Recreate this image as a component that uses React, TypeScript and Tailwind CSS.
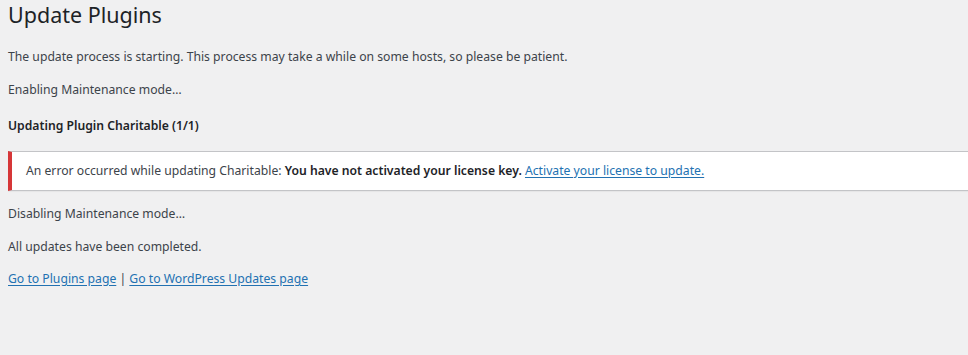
export default function App() {
  return (
    <div className="min-h-[355px] overflow-hidden bg-[#f0f0f1] pl-2 font-['Noto_Sans',sans-serif] text-[12.2px] leading-[19.5px] text-[#3c434a]">
      <h1 className="text-[21.5px] leading-[30px] font-normal text-[#1d2327]">Update Plugins</h1>
      <p className="mt-[17px]">
        The update process is starting. This process may take a while on some hosts, so please be patient.
      </p>
      <p className="mt-[13px]">Enabling Maintenance mode…</p>
      <p className="mt-[17px] font-semibold text-[#1d2327]">Updating Plugin Charitable (1/1)</p>
      <div className="mt-[15px] w-[calc(100%+40px)] border border-l-4 border-[#c3c4c7] border-l-[#d63638] bg-white pr-[13px] pl-[14px] pt-[9px] pb-[10px] shadow-[0_1px_1px_rgba(0,0,0,0.04)]">
        <p>
          An error occurred while updating Charitable:{" "}
          <strong className="font-semibold text-[#1d2327]">You have not activated your license key.</strong>{" "}
          <a href="#" className="text-[#2271b1] underline underline-offset-2">
            Activate your license to update.
          </a>
        </p>
      </div>
      <p className="mt-[13px]">Disabling Maintenance mode…</p>
      <p className="mt-[13px]">All updates have been completed.</p>
      <p className="mt-[13px]">
        <a href="#" className="text-[#2271b1] underline underline-offset-2">
          Go to Plugins page
        </a>{" "}
        |{" "}
        <a href="#" className="text-[#2271b1] underline underline-offset-2">
          Go to WordPress Updates page
        </a>
      </p>
    </div>
  );
}
